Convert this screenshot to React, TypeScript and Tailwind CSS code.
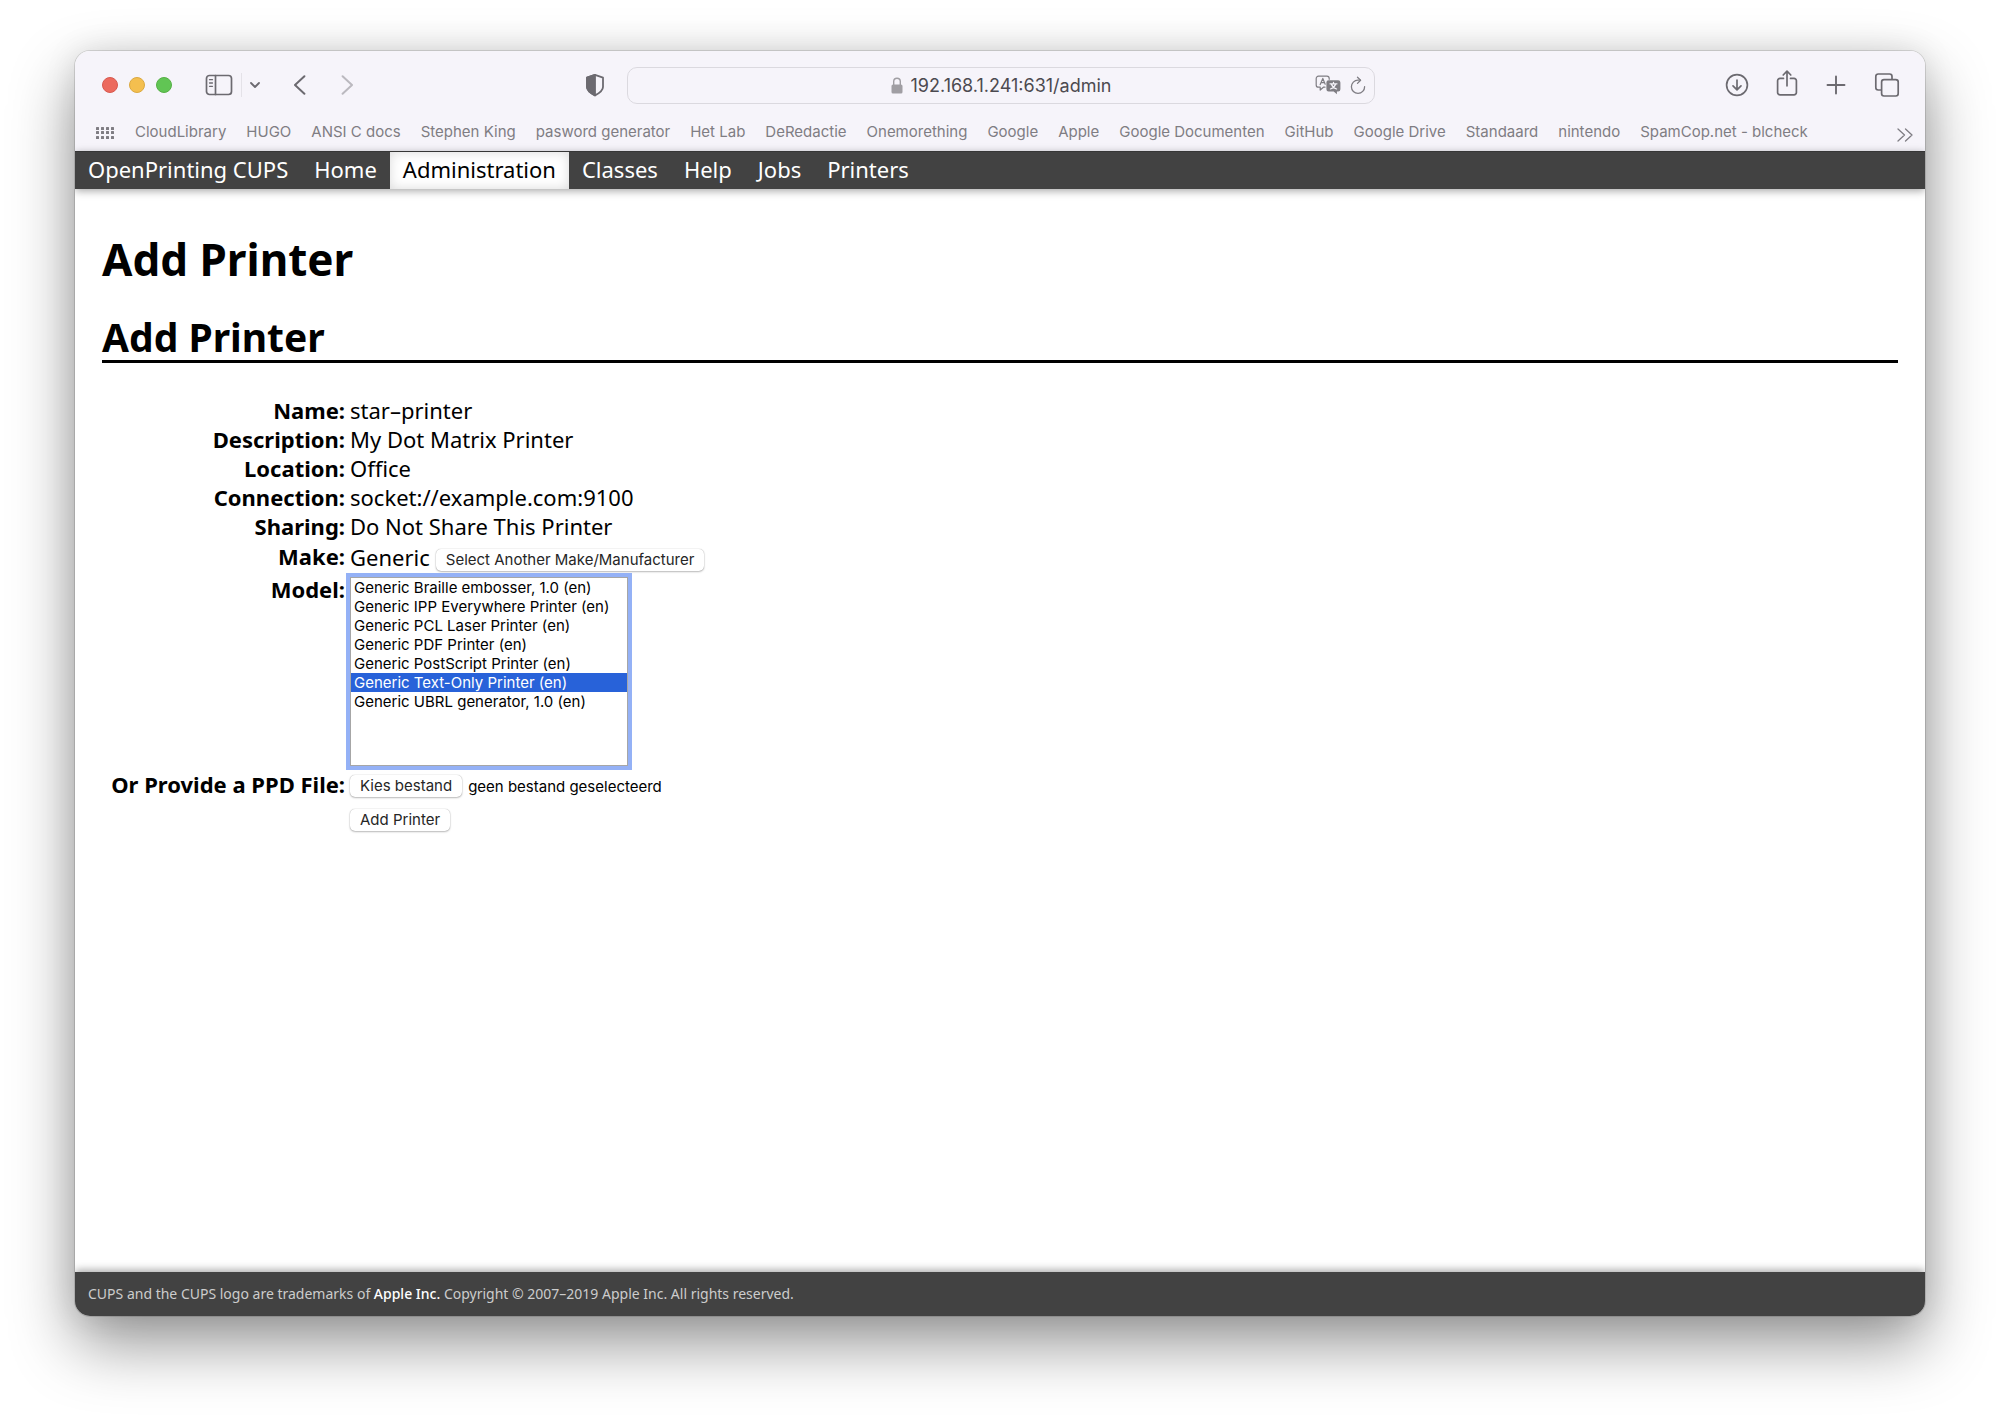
import { useRef } from "react";

const bookmarks = [
  "CloudLibrary",
  "HUGO",
  "ANSI C docs",
  "Stephen King",
  "pasword generator",
  "Het Lab",
  "DeRedactie",
  "Onemorething",
  "Google",
  "Apple",
  "Google Documenten",
  "GitHub",
  "Google Drive",
  "Standaard",
  "nintendo",
  "SpamCop.net - blcheck",
];

const navItems = ["OpenPrinting CUPS", "Home", "Administration", "Classes", "Help", "Jobs", "Printers"];

const models = [
  "Generic Braille embosser, 1.0 (en)",
  "Generic IPP Everywhere Printer (en)",
  "Generic PCL Laser Printer (en)",
  "Generic PDF Printer (en)",
  "Generic PostScript Printer (en)",
  "Generic Text-Only Printer (en)",
  "Generic UBRL generator, 1.0 (en)",
];

const details = [
  ["Name:", "star–printer"],
  ["Description:", "My Dot Matrix Printer"],
  ["Location:", "Office"],
  ["Connection:", "socket://example.com:9100"],
  ["Sharing:", "Do Not Share This Printer"],
];

const line = {
  fill: "none",
  stroke: "currentColor",
  strokeLinecap: "round" as const,
  strokeLinejoin: "round" as const,
};

function SidebarIcon() {
  return (
    <svg width="28" height="22" viewBox="0 0 28 22" {...line} strokeWidth="1.7">
      <rect x="1.5" y="1.5" width="25" height="19" rx="3" />
      <path d="M10.5 1.5v19" />
      <path d="M4.5 5.7h3M4.5 9h3M4.5 12.3h3" strokeWidth="1.3" />
    </svg>
  );
}

function ShieldIcon() {
  return (
    <svg width="20" height="24" viewBox="0 0 20 24" {...line} strokeWidth="1.8">
      <path d="M10 1.9 2 4.700v9.300c0 3.600 3.200 5.900 8 8.400 4.800-2.500 8-4.800 8-8.400V4.700z" />
      <path d="M10 1.900 2 4.700v9.300c0 3.600 3.200 5.900 8 8.400z" fill="currentColor" />
    </svg>
  );
}

function LockIcon() {
  return (
    <svg width="12" height="17" viewBox="0 0 12 17" fill="none">
      <path d="M2.700 8V4.600a3.300 3.300 0 0 1 6.600 0V8" stroke="#a09ea3" strokeWidth="1.400" />
      <rect x="0.500" y="7.500" width="11" height="9" rx="1.500" fill="#a09ea3" />
    </svg>
  );
}

function TranslateIcon() {
  return (
    <svg width="26" height="20" viewBox="0 0 26 20" {...line} strokeWidth="1.2">
      <path d="M10 12.200H8.400L5.200 15v-2.800H3.500a2.300 2.300 0 0 1-2.300-2.300V3.500a2.300 2.300 0 0 1 2.300-2.300h8.400a2.300 2.300 0 0 1 2.300 2.300v.8" />
      <path d="M5.200 9.600 7.800 3.400 10.200 9.200M6.200 7.600h3.200" />
      <path d="M13.600 5.200h9.600a2.200 2.200 0 0 1 2.200 2.200v6.800a2.200 2.200 0 0 1-2.200 2.200h-1.300v2.800l-3.200-2.800h-5.100a2.200 2.200 0 0 1-2.200-2.200V7.400a2.200 2.200 0 0 1 2.200-2.200z" fill="currentColor" stroke="none" />
      <path d="M15 8.800h7M18.500 7.300v1.500M20.700 9c-.8 2.400-2.500 4-5.300 5M16.300 9c.8 2.400 2.500 4 5.300 5" stroke="#f6f4fa" />
    </svg>
  );
}

function ReloadIcon() {
  return (
    <svg width="16" height="19" viewBox="0 0 16 19" {...line} strokeWidth="1.3">
      <path d="M14.600 10.700A6.600 6.600 0 1 1 8 4.200h2.200" />
      <path d="M7.500 1.200 10.600 4.200 7.500 7.400" />
    </svg>
  );
}

function DownloadIcon() {
  return (
    <svg width="24" height="24" viewBox="0 0 24 24" {...line} strokeWidth="1.7">
      <circle cx="12" cy="12" r="10.400" />
      <path d="M12 7v9.600M8 12.800l4 4 4-4" />
    </svg>
  );
}

function ShareIcon() {
  return (
    <svg width="22" height="28" viewBox="0 0 22 28" {...line} strokeWidth="1.7">
      <path d="M7.500 9.400H4a2.400 2.400 0 0 0-2.400 2.400v11.600A2.400 2.400 0 0 0 4 25.800h14a2.400 2.400 0 0 0 2.400-2.400V11.800A2.400 2.400 0 0 0 18 9.400h-3.500" />
      <path d="M11 16.800V2.600M7.200 6 11 2.200 14.800 6" />
    </svg>
  );
}

function TabsIcon() {
  return (
    <svg width="26" height="26" viewBox="0 0 26 26" {...line} strokeWidth="1.7">
      <rect x="7.600" y="7.600" width="16.600" height="16.400" rx="2.400" />
      <path d="M18 7.200V4.400A2.400 2.400 0 0 0 15.600 2H4.200a2.400 2.400 0 0 0-2.400 2.400v11.200A2.400 2.400 0 0 0 4.200 18h3" />
    </svg>
  );
}

function Toolbar() {
  return (
    <div className="flex h-[70px] items-center pr-[25px] pb-0.5 pl-[27px] text-[#6c6a70]">
      <div className="flex flex-1 items-center">
        <div className="flex gap-[11px]">
          <button aria-label="Close" className="size-4 rounded-full border border-[#d8594f] bg-[#ec6a5e]" />
          <button aria-label="Minimize" className="size-4 rounded-full border border-[#dba940] bg-[#f4bf4f]" />
          <button aria-label="Zoom" className="size-4 rounded-full border border-[#56b045] bg-[#61c554]" />
        </div>
        <button aria-label="Sidebar" className="ml-[33px]"><SidebarIcon /></button>
        <span className="ml-2 h-6 w-px bg-[#e4e2e8]" />
        <button aria-label="Tab groups" className="ml-2">
          <svg width="10" height="8" viewBox="0 0 10 8" {...line} strokeWidth="1.8"><path d="M1 2l4 4 4-4" /></svg>
        </button>
        <button aria-label="Back" className="ml-[33px]">
          <svg width="13" height="20" viewBox="0 0 13 20" {...line} strokeWidth="2"><path d="M11.400 1.200 2 10l9.400 8.800" /></svg>
        </button>
        <button aria-label="Forward" className="ml-[35px] text-[#bbb9bf]">
          <svg width="13" height="20" viewBox="0 0 13 20" {...line} strokeWidth="2"><path d="M1.600 1.200 11 10l-9.400 8.800" /></svg>
        </button>
        <button aria-label="Privacy report" className="mr-[22px] ml-auto"><ShieldIcon /></button>
      </div>
      <div className="flex h-[37px] w-[748px] items-center rounded-[10px] border border-[#dbd9df] px-2">
        <div className="flex-1" />
        <div className="flex items-center gap-2">
          <LockIcon />
          <input
            aria-label="Address"
            defaultValue="192.168.1.241:631/admin"
            className="[field-sizing:content] bg-transparent text-[18px] text-[#4c4a50] outline-none"
          />
        </div>
        <div className="flex flex-1 items-center justify-end gap-[9px] text-[#7f7d83]">
          <button aria-label="Translate"><TranslateIcon /></button>
          <button aria-label="Reload"><ReloadIcon /></button>
        </div>
      </div>
      <div className="flex flex-1 items-center justify-end">
        <button aria-label="Downloads"><DownloadIcon /></button>
        <button aria-label="Share" className="-mt-1 ml-[27px]"><ShareIcon /></button>
        <button aria-label="New tab" className="ml-7">
          <svg width="20" height="20" viewBox="0 0 20 20" {...line} strokeWidth="1.9"><path d="M10 1.500v17M1.500 10h17" /></svg>
        </button>
        <button aria-label="Tabs" className="ml-7"><TabsIcon /></button>
      </div>
    </div>
  );
}

function Bookmarks() {
  return (
    <div className="flex h-[30px] items-center pr-3 pb-[7px] pl-[21px] text-[15px] text-[#7f7d83]">
      <svg width="18" height="12" viewBox="0 0 18 12" fill="currentColor" aria-hidden="true">
        {[0, 5, 10, 15].flatMap((x) => [0, 4, 9].map((y) => <rect key={`${x}-${y}`} x={x} y={y} width="3" height="3" rx="0.5" />))}
      </svg>
      <nav aria-label="Favorites" className="ml-[21px] flex gap-5 whitespace-nowrap">
        {bookmarks.map((b) => (
          <a key={b} href="#">{b}</a>
        ))}
      </nav>
      <button aria-label="More favorites" className="mt-1 ml-auto">
        <svg width="16" height="14" viewBox="0 0 16 14" {...line} strokeWidth="1.3"><path d="M1 1l6.500 6L1 13M8.500 1l6.500 6-6.500 6" /></svg>
      </button>
    </div>
  );
}

const pushButton =
  "h-[22px] rounded-[5px] bg-white px-[10px] font-['Inter',sans-serif] text-[15px] leading-[22px] text-[#262626] shadow-[0_0_1px_rgba(0,0,0,0.35),0_1px_2px_rgba(0,0,0,0.25)]";

export default function App() {
  const file = useRef<HTMLInputElement>(null);
  return (
    <div className="flex min-h-screen bg-white px-[75px] pt-[51px] pb-[99px] font-['Inter',sans-serif]">
      <div className="flex flex-1 flex-col overflow-hidden rounded-[15px] bg-white shadow-[0_0_0_1px_rgba(0,0,0,0.12),0_28px_64px_rgba(0,0,0,0.42),0_0_32px_rgba(0,0,0,0.1)]">
        <header className="bg-[#f6f4fa]">
          <Toolbar />
          <Bookmarks />
        </header>
        <div className="flex flex-1 flex-col font-['Noto_Sans',sans-serif]">
          <nav className="relative flex h-[38px] border-t border-[#363636] bg-[#424242] text-[22px] leading-[35px] text-white shadow-[0_2px_8px_rgba(0,0,0,0.35)]">
            {navItems.map((n) => (
              <a
                key={n}
                href="#"
                className={
                  n === "Administration"
                    ? "bg-white px-[13px] text-black shadow-[inset_0_0_12px_rgba(0,0,0,0.15)]"
                    : "px-[13px]"
                }
              >
                {n}
              </a>
            ))}
          </nav>
          <main className="flex-1 px-[27px] text-[22px] leading-[29px] text-black">
            <h1 className="mt-10 text-[44px] leading-[60px] font-bold">Add Printer</h1>
            <h2 className="mt-6 border-b-[3px] border-black text-[39px] leading-[47px] font-bold">Add Printer</h2>
            <form className="mt-[33px]" onSubmit={(e) => e.preventDefault()}>
              <table>
                <tbody className="align-top">
                  {details.map(([k, v]) => (
                    <tr key={k}>
                      <th scope="row" className="w-[248px] pr-[5px] text-right font-bold">{k}</th>
                      <td>{v}</td>
                    </tr>
                  ))}
                  <tr>
                    <th scope="row" className="pt-px pr-[5px] text-right font-bold">Make:</th>
                    <td>
                      <div className="flex h-8 items-center gap-1.5">
                        Generic
                        <button className={`mt-1.5 ${pushButton}`}>Select Another Make/Manufacturer</button>
                      </div>
                    </td>
                  </tr>
                  <tr>
                    <th scope="row" className="pt-0.5 pr-[5px] text-right font-bold">
                      <label htmlFor="model">Model:</label>
                    </th>
                    <td className="py-1">
                      <select
                        id="model"
                        size={10}
                        defaultValue={models[5]}
                        className="block h-[189px] w-[278px] appearance-none overflow-hidden border border-[#a6a6a6] bg-white font-['Inter',sans-serif] text-[15px] leading-[19px] outline-4 outline-[#94b1f6]"
                      >
                        {models.map((m) => (
                          <option
                            key={m}
                            className="min-h-0 px-[3px] py-0 leading-[19px] checked:bg-[linear-gradient(#2862d9,#2862d9)] checked:[-webkit-text-fill-color:white]"
                          >
                            {m}
                          </option>
                        ))}
                      </select>
                    </td>
                  </tr>
                  <tr>
                    <th scope="row" className="pr-[5px] text-right font-bold whitespace-nowrap">
                      <label htmlFor="ppd">Or Provide a PPD File:</label>
                    </th>
                    <td>
                      <div className="flex h-8 items-center gap-[6px]">
                        <button type="button" className={pushButton} onClick={() => file.current?.click()}>Kies bestand</button>
                        <span className="font-['Inter',sans-serif] text-[15px]">geen bestand geselecteerd</span>
                        <input ref={file} id="ppd" type="file" className="sr-only" />
                      </div>
                    </td>
                  </tr>
                  <tr>
                    <td />
                    <td>
                      <button className={pushButton}>Add Printer</button>
                    </td>
                  </tr>
                </tbody>
              </table>
            </form>
          </main>
          <footer className="relative h-11 bg-[#424242] px-[13px] text-[14px] leading-[44px] text-[#ccc] shadow-[0_-2px_8px_rgba(0,0,0,0.35)]">
            CUPS and the CUPS logo are trademarks of{" "}
            <a href="#" className="font-medium text-white">Apple Inc.</a>{" "}
            Copyright © 2007–2019 Apple Inc. All rights reserved.
          </footer>
        </div>
      </div>
    </div>
  );
}
